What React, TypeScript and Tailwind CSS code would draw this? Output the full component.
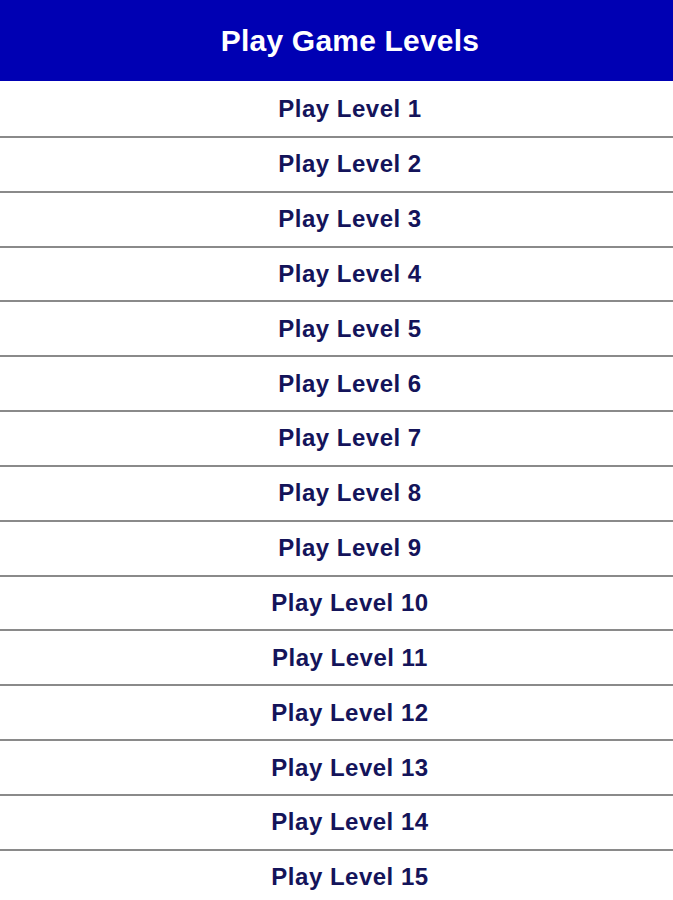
const levels = Array.from({ length: 15 }, (_, i) => i + 1);

export default function App() {
  return (
    <main className="min-h-screen w-[700px] bg-white font-['Liberation_Sans',Arial,sans-serif]">
      {/* Header */}
      <header className="h-[81px] bg-[#0000b3] flex items-center justify-center">
        <h1 className="text-[30px] font-bold text-white tracking-[0.2px]">Play Game Levels</h1>
      </header>

      {/* Level list */}
      <ul className="pt-[2px]">
        {levels.map(level => (
          <li
            key={level}
            className="h-[54.85px] flex items-center justify-center border-b-2 border-[#8a8a8a]"
          >
            <a href="#" className="text-[24px] font-bold text-[#14145a] tracking-[0.5px]">
              Play Level {level}
            </a>
          </li>
        ))}
      </ul>
    </main>
  );
}
